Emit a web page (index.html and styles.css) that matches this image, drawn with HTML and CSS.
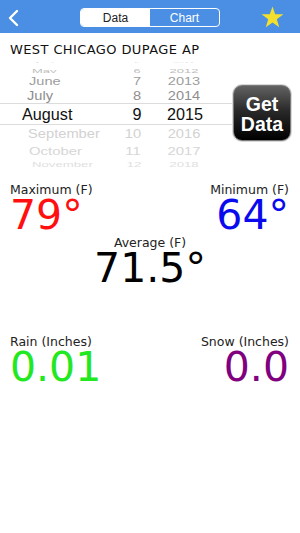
FILE: index.html
```html
<!DOCTYPE html>
<html>
<head>
<meta charset="utf-8">
<link rel="stylesheet" href="styles.css">
</head>
<body>
<header class="bar">
  <svg class="back" width="14" height="18" viewBox="0 0 14 18"><polyline points="11,2 4,9 11,16" fill="none" stroke="#fff" stroke-width="2.4" stroke-linecap="round" stroke-linejoin="round"/></svg>
  <div class="seg">
    <span class="seg-item on">Data</span>
    <span class="seg-item">Chart</span>
  </div>
  <svg class="star" width="23" height="22" viewBox="0 0 24 23"><polygon points="12,0.5 14.8,8.6 23.4,8.7 16.5,13.9 19,22.2 12,17.2 5,22.2 7.5,13.9 0.6,8.7 9.2,8.6" fill="#f4e02c"/></svg>
</header>

<div class="station">WEST CHICAGO DUPAGE AP</div>

<div class="picker-area">
  <div class="picker">
    <div class="prow r-apr"><span class="m">April</span><span class="d">5</span><span class="y">2011</span></div>
    <div class="prow r-may"><span class="m">May</span><span class="d">6</span><span class="y">2012</span></div>
    <div class="prow r-jun"><span class="m">June</span><span class="d">7</span><span class="y">2013</span></div>
    <div class="prow r-jul"><span class="m">July</span><span class="d">8</span><span class="y">2014</span></div>
    <div class="prow r-aug"><span class="m">August</span><span class="d">9</span><span class="y">2015</span></div>
    <div class="prow r-sep"><span class="m">September</span><span class="d">10</span><span class="y">2016</span></div>
    <div class="prow r-oct"><span class="m">October</span><span class="d">11</span><span class="y">2017</span></div>
    <div class="prow r-nov"><span class="m">November</span><span class="d">12</span><span class="y">2018</span></div>
  </div>
  <div class="get">Get<br>Data</div>
</div>

<div class="pair">
  <div class="stat">
    <div class="lbl">Maximum (F)</div>
    <div class="val red">79°</div>
  </div>
  <div class="stat right">
    <div class="lbl">Minimum (F)</div>
    <div class="val blue">64°</div>
  </div>
</div>

<div class="stat center avg">
  <div class="lbl">Average (F)</div>
  <div class="val">71.5°</div>
</div>

<div class="pair precip">
  <div class="stat">
    <div class="lbl">Rain (Inches)</div>
    <div class="val green">0.01</div>
  </div>
  <div class="stat right">
    <div class="lbl">Snow (Inches)</div>
    <div class="val purple">0.0</div>
  </div>
</div>
</body>
</html>
```

FILE: styles.css
```css
* { box-sizing: border-box; }
html, body { margin: 0; padding: 0; background: #fff; }
body { width: 300px; height: 533px; overflow: hidden; font-family: "Liberation Sans", Arial, sans-serif; color: #111; }

.bar {
  height: 33px;
  background: #4a8fe4;
  display: grid;
  grid-template-columns: 1fr auto 1fr;
  align-items: center;
}
.back { justify-self: start; margin-left: 6px; margin-top: 2px; }
.star { justify-self: end; margin-right: 16px; margin-top: 1px; }

.seg {
  display: flex;
  width: 140px;
  height: 19px;
  border: 1px solid #fff;
  border-radius: 4px;
  overflow: hidden;
  margin-top: 2px;
}
.seg-item {
  flex: 1;
  display: flex;
  align-items: center;
  justify-content: center;
  font-size: 12px;
  color: #fff;
}
.seg-item.on { background: #fff; color: #222; }

.station {
  padding: 9px 10px 0;
  font-family: "DejaVu Sans", sans-serif;
  font-size: 13px;
  letter-spacing: 0.4px;
  line-height: 16px;
  height: 25px;
  color: #111;
}

.picker-area {
  display: flex;
  align-items: center;
}
.picker {
  width: 233px;
  display: flex;
  flex-direction: column;
}
.prow {
  display: grid;
  grid-template-columns: 120px 34px 60px;
  align-items: center;
  overflow: hidden;
  white-space: nowrap;
}
.prow span { display: block; }
.prow .d, .prow .y { text-align: center; }

.r-apr { height: 5px; font-size: 10px; color: #e2e2e2; }
.r-apr span { transform: scaleY(0.35); }
.r-apr .m { padding-left: 34px; }

.r-may { height: 10px; font-size: 13px; color: #bdbdbd; }
.r-may span { transform: scaleY(0.48); }
.r-may .m { padding-left: 32px; }
.r-may .d { padding-left: 0; }

.r-jun { height: 15px; font-size: 14.6px; color: #9d9d9d; }
.r-jun span { transform: scaleY(0.7); }
.r-jun .m { padding-left: 29px; }

.r-jul { height: 15px; font-size: 14.6px; color: #8e8e8e; }
.r-jul span { transform: scaleY(0.82); }
.r-jul .m { padding-left: 27px; }

.r-aug {
  height: 22px;
  font-size: 16.2px;
  color: #111;
  border-top: 1px solid #dcdcdc;
  border-bottom: 1px solid #dcdcdc;
}
.r-aug .m { padding-left: 22px; }
.r-aug .y { padding-left: 2px; }

.r-sep { height: 18px; font-size: 14.7px; color: #d2d2d2; }
.r-sep span { transform: scaleY(0.88); }
.r-sep .m { padding-left: 28px; }
.r-sep .d { padding-right: 8px; }

.r-oct { height: 14px; font-size: 14.9px; color: #d6d6d6; }
.r-oct span { transform: scaleY(0.72); }
.r-oct .m { padding-left: 29px; }
.r-oct .d { padding-right: 8px; }

.r-nov { height: 11px; font-size: 13.2px; color: #e0e0e0; }
.r-nov span { transform: scaleY(0.5); }
.r-nov .m { padding-left: 32px; }
.r-nov .d { padding-right: 6px; }

.get {
  width: 58px;
  height: 56px;
  margin-left: 0;
  border-radius: 9px;
  border: 1px solid #7a7a7a;
  background: linear-gradient(#626262 0%, #2a2a2a 45%, #000 100%);
  box-shadow: 0 0 0 1px #d8d8d8;
  color: #fff;
  font-weight: bold;
  font-size: 19.5px;
  line-height: 20px;
  text-align: center;
  padding-top: 8px;
}

.pair {
  display: flex;
  justify-content: space-between;
  padding: 0 11px 0 10px;
  margin-top: 14px;
}
.stat { display: flex; flex-direction: column; }
.stat.right { align-items: flex-end; }
.stat.center { align-items: center; }
.lbl {
  font-family: "DejaVu Sans", sans-serif;
  font-size: 12.5px;
  line-height: 15px;
  color: #222;
}
.val {
  font-family: "DejaVu Sans", sans-serif;
  font-size: 41px;
  line-height: 36px;
  color: #000;
}
.avg { margin-top: 2px; }
.precip { margin-top: 48px; }
.red { color: #ff0f0f; }
.blue { color: #0a0aee; }
.green { color: #22e822; }
.purple { color: #800080; }
```
